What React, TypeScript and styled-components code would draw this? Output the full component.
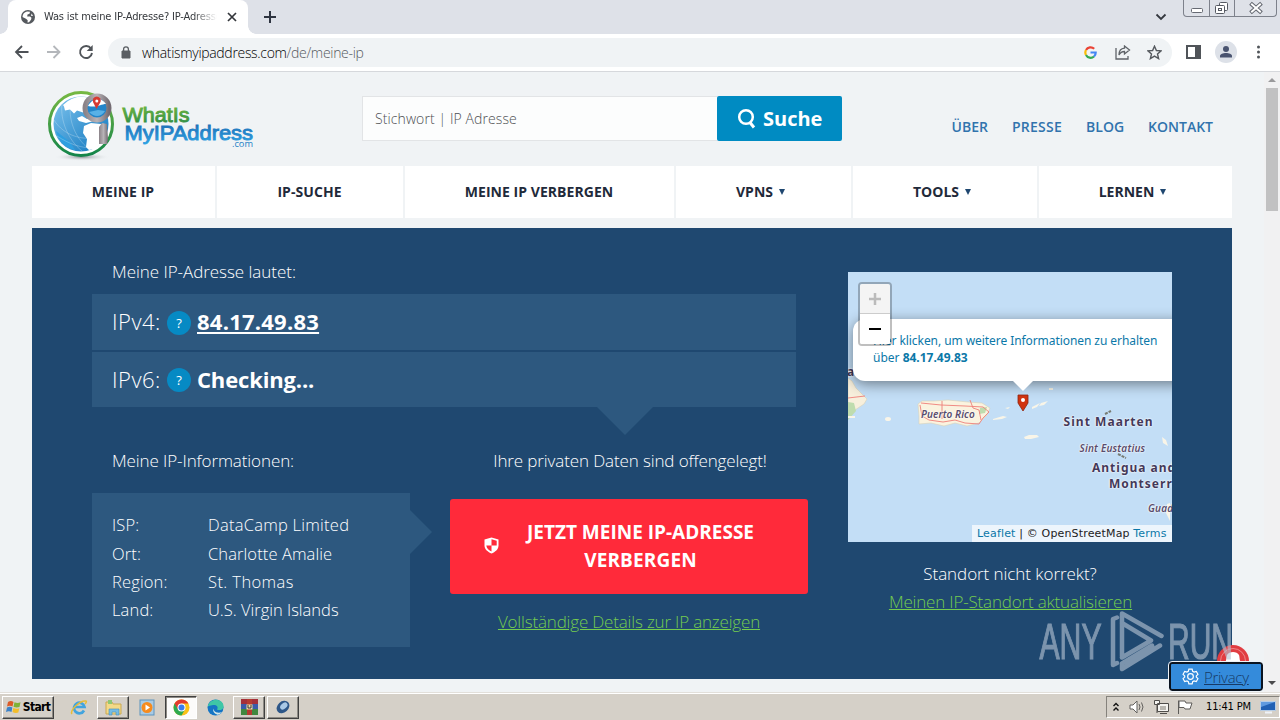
import React from 'react';
import styled, { createGlobalStyle, css } from 'styled-components';

const GlobalStyle = createGlobalStyle`
  * { box-sizing: border-box; }
  body { margin: 0; overflow: hidden; background: #f0f3f6; font-family: "Open Sans", "Noto Sans", sans-serif; }
  a { color: inherit; }
`;

const sysFont = '"DejaVu Sans Condensed", "DejaVu Sans", sans-serif';

const Screen = styled.div`
  position: relative;
  width: 1280px;
  height: 720px;
  display: flex;
  flex-direction: column;
  overflow: hidden;
`;

const Label = styled.span<{ $ls?: number }>`
  white-space: nowrap;
  letter-spacing: ${p => p.$ls ?? 0}px;
`;

/* ---------- browser chrome ---------- */

const TabStrip = styled.div`
  height: 34px;
  flex: none;
  display: flex;
  align-items: flex-start;
  background: #dee1e8;
  padding-left: 8px;
`;

const Tab = styled.div`
  position: relative;
  width: 240px;
  height: 34px;
  display: flex;
  align-items: center;
  padding: 0 9px 0 13px;
  gap: 8px;
  background: #fff;
  border-radius: 8px 8px 0 0;
  &::before, &::after {
    content: "";
    position: absolute;
    bottom: 0;
    width: 8px;
    height: 8px;
  }
  &::before { left: -8px; background: radial-gradient(circle at 0 0, #dee1e8 7.5px, #fff 8px); }
  &::after { right: -8px; background: radial-gradient(circle at 100% 0, #dee1e8 7.5px, #fff 8px); }
`;

const TabTitle = styled.div`
  flex: 1;
  overflow: hidden;
  white-space: nowrap;
  font: 11px/16px ${sysFont};
  letter-spacing: -0.15px;
  padding-left: 1px;
  color: #34373b;
  mask-image: linear-gradient(90deg, #000 86%, transparent);
`;

const StripIcon = styled.div<{ $ml: number; $mt: number }>`
  margin: ${p => p.$mt}px 0 0 ${p => p.$ml}px;
  display: flex;
`;

const WindowButtons = styled.div`
  display: flex;
  width: 94px;
  height: 17px;
  margin-left: 16px;
  border: 1px solid #7d818b;
  border-top: 0;
  border-radius: 0 0 4px 4px;
`;

const WindowButton = styled.div<{ $w: number }>`
  width: ${p => p.$w}px;
  display: flex;
  justify-content: center;
  & + & { border-left: 1px solid #7d818b; }
`;

const Toolbar = styled.div`
  height: 38px;
  flex: none;
  display: flex;
  align-items: center;
  padding: 0 19px 1px 14px;
  background: #fff;
  border-bottom: 1px solid #d6d8dc;
`;

const ToolIcon = styled.div<{ $w: number }>`
  width: ${p => p.$w}px;
  display: flex;
  align-items: center;
  flex: none;
`;

const AddressBar = styled.div`
  flex: 1;
  height: 29px;
  border-radius: 15px;
  background: #f0f3f5;
  display: flex;
  align-items: center;
  padding: 0 10px 0 13px;
  margin-right: 14px;
`;

const Url = styled.div`
  flex: 1;
  margin: 1px 0 0 11px;
  font-size: 14px;
  font-weight: 300;
  line-height: 20px;
  letter-spacing: -0.32px;
  color: #55595e;
  b { font-weight: 300; color: #000; }
`;

/* ---------- page ---------- */

const Viewport = styled.div`
  height: 620px;
  flex: none;
  display: flex;
`;

const Page = styled.main`
  width: 1264px;
  padding: 0 32px;
  background: #f0f3f5;
`;

const Scrollbar = styled.div`
  width: 16px;
  background: #f1f1f2;
  display: flex;
  flex-direction: column;
  align-items: center;
  justify-content: space-between;
  padding: 5px 0 6px;
`;

const Thumb = styled.div`
  width: 12px;
  height: 123px;
  margin: 6px 0 auto;
  background: #c1c1c2;
`;

const Header = styled.header`
  height: 94px;
  display: flex;
  align-items: flex-start;
  padding-right: 19px;
`;

const LogoBox = styled.div`
  width: 330px;
  height: 94px;
`;

const SearchInput = styled.div`
  width: 355px;
  height: 45px;
  margin-top: 24px;
  padding-left: 12px;
  border: 1px solid #e2e4e6;
  border-right: 0;
  background: #fcfdfd;
  color: #4c4f52;
  font-size: 14px;
  font-weight: 300;
  line-height: 44px;
`;

const SearchButton = styled.div`
  width: 125px;
  height: 45px;
  margin-top: 24px;
  display: flex;
  align-items: center;
  gap: 6px;
  padding-left: 20px;
  border-radius: 2px;
  background: #008bc2;
  color: #fff;
  font-size: 20px;
  font-weight: 700;
`;

const HeaderLinks = styled.div`
  margin: 45px 0 0 auto;
  display: flex;
  gap: 24px;
  font-size: 14px;
  font-weight: 600;
  line-height: 20px;
  color: #3173ad;
`;

const Nav = styled.nav`
  display: flex;
  gap: 2px;
  height: 52px;
`;

const NavItem = styled.div<{ $w: number; $menu: boolean }>`
  width: ${p => p.$w}px;
  display: flex;
  align-items: center;
  justify-content: center;
  gap: 6px;
  padding: 0 ${p => (p.$menu ? 6 : 1)}px 1px 0;
  background: #fff;
  color: #1f2a3a;
  font-size: 14px;
  font-weight: 700;
`;

const Caret = styled.i`
  border: 3px solid transparent;
  border-top: 6px solid #1f4770;
  border-bottom: 0;
`;

const Hero = styled.section`
  margin-top: 10px;
  height: 451px;
  background: #1f4870;
  display: flex;
  padding: 0 60px;
  color: #fff;
`;

const Left = styled.div`
  width: 716px;
  margin-right: 40px;
`;

const Intro = styled.div`
  height: 66px;
  padding: 32px 0 0 20px;
  font-size: 17px;
  line-height: 24px;
  font-weight: 300;
`;

const IpList = styled.div`
  position: relative;
  width: 704px;
  display: flex;
  flex-direction: column;
  gap: 2px;
  &::after {
    content: "";
    position: absolute;
    left: 505px;
    top: 113px;
    border: 28px solid transparent;
    border-top-color: #2d587f;
    border-bottom: 0;
  }
`;

const IpRow = styled.div<{ $h: number }>`
  height: ${p => p.$h}px;
  display: flex;
  align-items: center;
  padding: 0 0 2px 20px;
  background: #2d587f;
  font-size: 22px;
  line-height: 30px;
`;

const IpLabel = styled.div`
  width: 55px;
  font-weight: 300;
  letter-spacing: 0.5px;
`;

const Help = styled.div`
  width: 24px;
  height: 24px;
  margin: 3px 6px 0 0;
  border-radius: 50%;
  background: #068ac4;
  text-align: center;
  font-size: 13px;
  line-height: 24px;
`;

const IpValue = styled.div<{ $link?: boolean; $ls: number }>`
  font-weight: 700;
  letter-spacing: ${p => p.$ls}px;
  ${p => p.$link && css`text-decoration: underline; text-decoration-thickness: 2px; text-underline-offset: 2px;`}
`;

const Lower = styled.div`
  display: flex;
  gap: 40px;
`;

const InfoColumn = styled.div`
  width: 318px;
`;

const InfoTitle = styled.div<{ $center?: boolean; $h: number }>`
  height: ${p => p.$h}px;
  padding: 42px 0 0 ${p => (p.$center ? 2 : 20)}px;
  text-align: ${p => (p.$center ? 'center' : 'left')};
  font-size: 17px;
  font-weight: 300;
  line-height: 24px;
`;

const InfoBox = styled.dl`
  position: relative;
  height: 154px;
  margin: 0;
  padding: 18px 20px;
  display: grid;
  grid-template-columns: 96px 1fr;
  grid-template-rows: 29px 28px 28px 28px;
  background: #2d587f;
  font-size: 16.5px;
  font-weight: 300;
  line-height: 28px;
  dt, dd { margin: 0; }
  &::after {
    content: "";
    position: absolute;
    left: 318px;
    top: 17px;
    border: 22px solid transparent;
    border-left-color: #2d587f;
    border-right: 0;
  }
`;

const ActionColumn = styled.div`
  width: 358px;
`;

const HideButton = styled.div`
  height: 95px;
  padding: 0 54px 2px 34px;
  display: flex;
  align-items: center;
  justify-content: space-between;
  border-radius: 3px;
  background: #ff2a3a;
  font-size: 19px;
  font-weight: 700;
  line-height: 28px;
  text-align: center;
`;

const GreenLink = styled.div<{ $mt: number; $shift?: number }>`
  margin-top: ${p => p.$mt}px;
  padding-left: ${p => p.$shift ?? 0}px;
  text-align: center;
  font-size: 17px;
  font-weight: 300;
  line-height: 24px;
  color: #74cc4f;
  text-decoration: underline;
`;

const Right = styled.div`
  width: 324px;
  padding-top: 44px;
`;

const MapView = styled.div`
  position: relative;
  width: 324px;
  height: 270px;
  overflow: hidden;
  background: #c3def6;
`;

const Land = styled.svg`
  display: block;
`;

const Place = styled.div<{ $x: number; $y: number; $size: number; $italic?: boolean; $ls: number }>`
  position: absolute;
  left: ${p => p.$x}px;
  top: ${p => p.$y}px;
  white-space: nowrap;
  font-family: "Noto Sans", sans-serif;
  font-size: ${p => p.$size}px;
  line-height: 16px;
  font-weight: ${p => (p.$italic ? 600 : 700)};
  font-style: ${p => (p.$italic ? 'italic' : 'normal')};
  letter-spacing: ${p => p.$ls}px;
  color: ${p => (p.$italic ? '#594c6c' : '#43395a')};
  text-shadow: 0 0 2px #fff, 0 0 2px #fff;
`;

const Popup = styled.div`
  position: absolute;
  left: 5px;
  top: 47px;
  width: 340px;
  height: 62px;
  padding: 13px 20px;
  border-radius: 12px;
  background: #fff;
  box-shadow: 0 3px 14px rgba(0, 0, 0, 0.45);
  color: #0b78a8;
  font-family: "Noto Sans", sans-serif;
  font-size: 12px;
  line-height: 17px;
  white-space: nowrap;
`;

const PopupTip = styled.svg`
  position: absolute;
  left: 160px;
  top: 108px;
`;

const Pin = styled.svg`
  position: absolute;
  left: 169px;
  top: 122px;
`;

const ZoomControl = styled.div`
  position: absolute;
  left: 10px;
  top: 10px;
  width: 34px;
  height: 64px;
  border: 2px solid rgba(0, 0, 0, 0.25);
  border-radius: 4px;
  overflow: hidden;
`;

const ZoomButton = styled.div<{ $off?: boolean }>`
  height: 30px;
  display: flex;
  align-items: center;
  justify-content: center;
  background: ${p => (p.$off ? '#f4f4f4' : '#fff')};
  border-bottom: ${p => (p.$off ? '1px solid #ccc' : '0')};
`;

const Attribution = styled.div`
  position: absolute;
  right: 0;
  bottom: 0;
  width: 200px;
  height: 17px;
  padding-left: 5px;
  background: rgba(255, 255, 255, 0.7);
  color: #222;
  font: 11px/18px "DejaVu Sans", sans-serif;
  white-space: nowrap;
  em { font-style: normal; color: #0b78a8; }
`;

const MapNote = styled.div`
  margin-top: 20px;
  text-align: center;
  font-size: 17px;
  font-weight: 300;
  line-height: 24px;
`;

/* ---------- overlays ---------- */

const Watermark = styled.svg`
  position: absolute;
  left: 1036px;
  top: 606px;
`;

const Badge = styled.svg`
  position: absolute;
  left: 1216px;
  top: 644px;
`;

const PrivacyButton = styled.div`
  position: absolute;
  left: 1169px;
  top: 662px;
  width: 94px;
  height: 29px;
  display: flex;
  align-items: center;
  padding-left: 11px;
  gap: 5px;
  border: 2px solid #0b1420;
  border-radius: 3px;
  outline: 1px solid #eef3f8;
  background: #348bdb;
  color: #173a66;
  font-size: 15px;
  font-weight: 300;
  line-height: 22px;
  text-decoration: underline;
`;

/* ---------- taskbar ---------- */

const Taskbar = styled.footer`
  height: 28px;
  flex: none;
  display: flex;
  align-items: center;
  padding: 1px 0 0 2px;
  background: #d5d0c8;
  border-top: 1px solid #e2dfda;
  box-shadow: inset 0 1px #fff;
`;

const TaskButton = styled.div<{ $w: number; $look?: 'up' | 'down'; $ml?: number }>`
  width: ${p => p.$w}px;
  height: 23px;
  margin-left: ${p => p.$ml ?? 0}px;
  display: flex;
  align-items: center;
  justify-content: center;
  gap: 2px;
  font: bold 12px/16px ${sysFont};
  color: #000;
  ${p => p.$look === 'up' && css`
    border: 1px solid;
    border-color: #fff #404040 #404040 #fff;
    box-shadow: inset -1px -1px #8d8a84;
  `}
  ${p => p.$look === 'down' && css`
    border: 1px solid;
    border-color: #404040 #fff #fff #404040;
    background: #fcfbfa;
    box-shadow: inset 1px 1px #8d8a84;
  `}
`;

const Tray = styled.div`
  margin-left: auto;
  width: 174px;
  height: 22px;
  display: flex;
  align-items: center;
  padding-left: 5px;
  border: 1px solid;
  border-color: #85827c #fff #fff #85827c;
  font: 11px/16px ${sysFont};
  color: #000;
`;

const TraySlot = styled.div<{ $w: number }>`
  width: ${p => p.$w}px;
  display: flex;
`;

const Logo = () => (
  <svg width="230" height="94" viewBox="32 72 230 94">
    <defs>
      <linearGradient id="ring" x1="0" y1="0" x2="0" y2="1">
        <stop offset="0" stopColor="#76b843" /><stop offset="1" stopColor="#14854a" />
      </linearGradient>
      <linearGradient id="sea" x1="0" y1="0" x2="1" y2="1">
        <stop offset="0" stopColor="#7fc4ee" /><stop offset="1" stopColor="#0d75bd" />
      </linearGradient>
      <linearGradient id="metal" x1="0" y1="0" x2="1" y2="0">
        <stop offset="0" stopColor="#8b8388" /><stop offset=".5" stopColor="#b8b3b7" /><stop offset="1" stopColor="#736b72" />
      </linearGradient>
      <linearGradient id="wordGreen" x1="0" y1="0" x2="0" y2="1">
        <stop offset="0" stopColor="#78ba3e" /><stop offset="1" stopColor="#2b8b45" />
      </linearGradient>
      <linearGradient id="wordBlue" x1="0" y1="0" x2="0" y2="1">
        <stop offset="0" stopColor="#1c66ae" /><stop offset="1" stopColor="#2da0e2" />
      </linearGradient>
      <radialGradient id="shade"><stop offset="0" stopColor="#8f9397" /><stop offset="1" stopColor="#f0f3f6" stopOpacity="0" /></radialGradient>
    </defs>
    <ellipse cx="82" cy="157" rx="28" ry="4" fill="url(#shade)" />
    <circle cx="81" cy="124" r="31.500" fill="#fff" stroke="url(#ring)" strokeWidth="3" />
    <circle cx="81" cy="124" r="27.500" fill="url(#sea)" />
    <path d="M63 105q8-8 18-8.500l7 1-1 9-4 6-6-2-3 3-4-4-5 1-1-4z" fill="#fff" />
    <path d="M84 126l7-3 10 1 5 8-3 10-8 7-6 1-3-3 1-8-4-6z" fill="#fff" />
    <path d="M77 118l5-2 5 3 6-2 1 4-8 2-7-2z" fill="#fff" />
    <path d="M56 131q4 16 19 19l-5-8z" fill="#2f9fe0" />
    <g fill="none" stroke="#fff" strokeOpacity=".4" strokeWidth=".6">
      <path d="M54 120c10 16 30 22 48 16M57 136c12 8 24 12 36 12M62 104c-2 16 6 36 20 47M72 98c-5 16 0 38 18 52" />
    </g>
    <circle cx="97" cy="108" r="12" fill="#2385c9" stroke="url(#metal)" strokeWidth="5" />
    <path d="M88 106c5-9 13-9 18-2-5 0-9 4-18 2z" fill="#fff" />
    <path d="M89 112c6 6 12 5 16-1l-7-1z" fill="#58b1e6" />
    <path d="M96.500 109l-3.500-7a4 4 0 1 1 7.500 0z" fill="#d63a31" />
    <circle cx="96.800" cy="101" r="1.500" fill="#fff" />
    <path d="M99 127l3-4 5 1 1 15-1 5h-8z" fill="url(#metal)" />
    <g fontFamily="Liberation Sans" strokeWidth=".9">
      <text x="122.500" y="121.500" fontSize="20.500" textLength="67" lengthAdjust="spacingAndGlyphs" fill="url(#wordGreen)" stroke="url(#wordGreen)">WhatIs</text>
      <text x="124.500" y="139.500" fontSize="20.500" textLength="128.500" lengthAdjust="spacingAndGlyphs" fill="url(#wordBlue)" stroke="url(#wordBlue)">MyIPAddress</text>
    </g>
    <text x="232" y="147" fontFamily="Open Sans" fontSize="9.500" textLength="21" lengthAdjust="spacingAndGlyphs" fill="#2280c5">.com</text>
  </svg>
);

const GlobeIcon = () => (
  <svg width="14" height="14" viewBox="0 0 14 14">
    <circle cx="7" cy="7" r="7" fill="#55595e" />
    <path d="M6 1.500l3 .3-.5 2-2 .8-.3 1.800 2.800.2 1.500 1.200-.5 2-2 2.500-1.500.3.2-2.300-1.700-1.600L1.500 7C1.500 4 3.500 2 6 1.500z" fill="#fff" />
    <path d="M10.500 3.500l1.600 2.200-2 .3z" fill="#fff" />
  </svg>
);

const ChromeIcon = () => (
  <svg width="17" height="17" viewBox="0 0 17 17">
    <circle cx="8.500" cy="8.500" r="8" fill="#fbc116" />
    <path d="M8.500 8.500L1.600 4.500A8 8 0 0 0 8.500 16.500l3.500-6z" fill="#2da94f" />
    <path d="M1.600 4.500A8 8 0 0 1 15.400 4.500H8.500L5 10.500z" fill="#e33b2e" />
    <circle cx="8.500" cy="8.500" r="4" fill="#fff" /><circle cx="8.500" cy="8.500" r="3" fill="#3b7ded" />
  </svg>
);

const navItems: [string, number, boolean][] = [
  ['MEINE IP', 183, false], ['IP-SUCHE', 186, false], ['MEINE IP VERBERGEN', 269, false],
  ['VPNS', 175, true], ['TOOLS', 184, true], ['LERNEN', 193, true],
];

const info: [string, string, number][] = [
  ['ISP:', 'DataCamp Limited', 0.25], ['Ort:', 'Charlotte Amalie', 0.1],
  ['Region:', 'St. Thomas', 0.4], ['Land:', 'U.S. Virgin Islands', 0],
];

export default function App() {
  return (
    <Screen>
      <GlobalStyle />
      <TabStrip>
        <Tab>
          <GlobeIcon />
          <TabTitle>Was ist meine IP-Adresse? IP-Adresse</TabTitle>
          <svg width="14" height="14" viewBox="0 0 14 14"><path d="M3 3l8 8M11 3l-8 8" stroke="#33363b" strokeWidth="1.700" /></svg>
        </Tab>
        <StripIcon $ml={16} $mt={11}>
          <svg width="12" height="12"><path d="M6 0v12M0 6h12" stroke="#2e3440" strokeWidth="2" /></svg>
        </StripIcon>
        <StripIcon $ml={879} $mt={13}>
          <svg width="12" height="9"><path d="M1.500 1.500L6 6l4.500-4.500" fill="none" stroke="#34383f" strokeWidth="1.800" /></svg>
        </StripIcon>
        <WindowButtons>
          <WindowButton $w={25}><svg width="24" height="16"><rect x="6.500" y="8.500" width="11" height="4" rx="1" fill="#fff" stroke="#666a73" /></svg></WindowButton>
          <WindowButton $w={25}><svg width="24" height="16" fill="#fff" stroke="#555962"><rect x="9.500" y="2.500" width="8" height="8" rx="1" /><rect x="5.500" y="5.500" width="9" height="8" rx="1" /><rect x="8.500" y="8.500" width="3" height="2" /></svg></WindowButton>
          <WindowButton $w={42}><svg width="24" height="16"><path d="M8 4.500l8 7M16 4.500l-8 7" stroke="#62666f" strokeWidth="4" strokeLinecap="square" /><path d="M8 4.500l8 7M16 4.500l-8 7" stroke="#fff" strokeWidth="2" strokeLinecap="square" /></svg></WindowButton>
        </WindowButtons>
      </TabStrip>

      <Toolbar>
        <ToolIcon $w={32}><svg width="16" height="14"><path d="M14.500 7H2M8 1L2 7l6 6" fill="none" stroke="#4d5156" strokeWidth="1.800" /></svg></ToolIcon>
        <ToolIcon $w={32}><svg width="16" height="14"><path d="M1 7h12.500M7.500 1l6 6-6 6" fill="none" stroke="#b4b7bb" strokeWidth="1.800" /></svg></ToolIcon>
        <ToolIcon $w={30}><svg width="16" height="16"><path d="M13 4.600A6 6 0 1 0 14 9" fill="none" stroke="#505459" strokeWidth="1.900" /><path d="M14.700 1v6h-6z" fill="#505459" /></svg></ToolIcon>
        <AddressBar>
          <svg width="10" height="13"><path d="M1 5h8v7H1z" fill="#5a5e63" stroke="#5a5e63" strokeLinejoin="round" /><path d="M2.600 5V3.200a2.400 2.400 0 0 1 4.800 0V5" fill="none" stroke="#5a5e63" strokeWidth="1.300" /></svg>
          <Url><b>whatismyipaddress.com</b>/de/meine-ip</Url>
          <ToolIcon $w={31}>
            <svg width="13" height="13" viewBox="0 0 13 13" fill="none" strokeWidth="2.200"><path d="M10.200 2.800A5.200 5.200 0 0 0 2 4" stroke="#ea4335" /><path d="M2 4a5.300 5.300 0 0 0 0 5" stroke="#fbbc05" /><path d="M2 9a5.200 5.200 0 0 0 8 1.500" stroke="#34a853" /><path d="M10 10.500A5.300 5.300 0 0 0 11.700 6.500H6.500" stroke="#4285f4" /></svg>
          </ToolIcon>
          <ToolIcon $w={32}>
            <svg width="16" height="15" fill="none" stroke="#5f6368" strokeWidth="1.300"><path d="M1 3v11h12v-3" /><path d="M9.500 1l5 4-5 4V6.500C6.500 6.500 5 8 4 10c0-4 2-6.500 5.500-6.800z" /></svg>
          </ToolIcon>
          <svg width="15" height="15" viewBox="0 0 15 15"><path d="M7.500 1.200l1.900 4.300 4.700.4-3.600 3.100 1.100 4.600-4.100-2.500-4.100 2.500 1.100-4.600L.9 5.900l4.700-.4z" fill="none" stroke="#55595e" strokeWidth="1.400" /></svg>
        </AddressBar>
        <ToolIcon $w={29}><svg width="15" height="14"><path d="M1 1h13v12H1z" fill="#fff" stroke="#505459" strokeWidth="2" /><path d="M9 0h6v14H9z" fill="#505459" /></svg></ToolIcon>
        <ToolIcon $w={41}><svg width="22" height="22"><circle cx="11" cy="11" r="11" fill="#dde1e8" /><circle cx="11" cy="8" r="3" fill="#4a5470" /><path d="M5 16.500v-1.500c0-4 12-4 12 0v1.500z" fill="#4a5470" /></svg></ToolIcon>
        <svg width="5" height="14" fill="#505459"><circle cx="2.500" cy="2" r="1.500" /><circle cx="2.500" cy="7" r="1.500" /><circle cx="2.500" cy="12" r="1.500" /></svg>
      </Toolbar>

      <Viewport>
        <Page>
          <Header>
            <LogoBox><Logo /></LogoBox>
            <SearchInput><Label $ls={0.1}>Stichwort | IP Adresse</Label></SearchInput>
            <SearchButton>
              <svg width="20" height="22"><circle cx="9" cy="9" r="6.800" fill="none" stroke="#fff" strokeWidth="2.500" /><path d="M13 14.500l4 5" stroke="#fff" strokeWidth="3" /></svg>
              <Label>Suche</Label>
            </SearchButton>
            <HeaderLinks><Label>ÜBER</Label><Label $ls={0.25}>PRESSE</Label><Label>BLOG</Label><Label>KONTAKT</Label></HeaderLinks>
          </Header>
          <Nav>
            {navItems.map(([name, w, menu]) => (
              <NavItem key={name} $w={w} $menu={menu}><Label $ls={menu ? 0 : 0.05}>{name}</Label>{menu && <Caret />}</NavItem>
            ))}
          </Nav>
          <Hero>
            <Left>
              <Intro><Label $ls={-0.04}>Meine IP-Adresse lautet:</Label></Intro>
              <IpList>
                <IpRow $h={56}><IpLabel>IPv4:</IpLabel><Help>?</Help><IpValue $link $ls={0.24}>84.17.49.83</IpValue></IpRow>
                <IpRow $h={55}><IpLabel>IPv6:</IpLabel><Help>?</Help><IpValue $ls={-0.15}>Checking...</IpValue></IpRow>
              </IpList>
              <Lower>
                <InfoColumn>
                  <InfoTitle $h={86}><Label $ls={-0.1}>Meine IP-Informationen:</Label></InfoTitle>
                  <InfoBox>
                    {info.map(([k, v, ls]) => <React.Fragment key={k}><dt><Label $ls={0.15}>{k}</Label></dt><dd><Label $ls={ls}>{v}</Label></dd></React.Fragment>)}
                  </InfoBox>
                </InfoColumn>
                <ActionColumn>
                  <InfoTitle $center $h={92}><Label $ls={-0.12}>Ihre privaten Daten sind offengelegt!</Label></InfoTitle>
                  <HideButton>
                    <svg width="15" height="17" viewBox="0 0 15 17"><path d="M7.500.5L14.500 2.500v6c0 4-3.500 6.500-7 8C4 15 .5 12.500.5 8.500v-6z" fill="#fff" /><path d="M7.500 2.300V8.500H12.700V3.800zM7.500 8.500V14.500C5 13.300 2.600 11.500 2.300 8.500z" fill="#ff2a3a" /></svg>
                    <div><Label>JETZT MEINE IP-ADRESSE</Label><br /><Label $ls={0.15}>VERBERGEN</Label></div>
                  </HideButton>
                  <GreenLink $mt={16}><Label $ls={-0.18}>Vollständige Details zur IP anzeigen</Label></GreenLink>
                </ActionColumn>
              </Lower>
            </Left>
            <Right>
              <MapView>
                <Land width="324" height="270">
                  <g stroke="#d9d2b8" strokeWidth=".6">
                    <path d="M0 106l4 3 4 7 7 7 4 4-3 5-9 6-7 2z" fill="#f7efdc" />
                    <path d="M70 132l4-3 12 0 14-1 20 2 14 1 8 5-3 7-8 8-12 3-12-3-11 3-13-3-12 1 0-8z" fill="#faf3df" />
                  </g>
                  <path d="M0 130l6 1 2 8-8 9zM132 136l7-1-2 6-6 1z" fill="#bfdcae" />
                  <path d="M0 126l17-2M73 131l20 2 24 1 18 1 6 5-6 6-4 6-14-1-10-3-12 2-14-2-7-4-2-11M94 129v18M122 128l3 8 6 2 2 10" fill="none" stroke="#ee7f79" strokeWidth=".9" />
                  <g fill="#f9f5e8">
                    <ellipse cx="40" cy="147" rx="3" ry="2" /><path d="M145 147l10-3 4 1-5 2-9 1zM157 136l5-1-2 2zM176 165l5-2h8l2 2-8 2-6 0zM184 135l8-4-3 4-5 2zM193 131l7-2-4 4-5 1zM201 116h4v2h-4z" />
                    <path d="M314 165l4 3 2 6-5-3zM322 231v18l-4-8 1-9zM0 144h7l0 2H0z" />
                  </g>
                  <path d="M257 142l6-3M270 182l8 4" stroke="#777b72" strokeWidth="2" strokeDasharray="3 1" />
                </Land>
                <Place $x={-1} $y={92} $size={12} $ls={0}>a</Place>
                <Place $x={73} $y={134} $size={10} $italic $ls={0.08}>Puerto Rico</Place>
                <Place $x={215.5} $y={142} $size={12} $ls={1.05}>Sint Maarten</Place>
                <Place $x={231.5} $y={168} $size={10} $italic $ls={0.2}>Sint Eustatius</Place>
                <Place $x={244} $y={188} $size={12} $ls={1}>Antigua and</Place>
                <Place $x={261} $y={204} $size={12} $ls={1}>Montserrat</Place>
                <Place $x={300} $y={227.500} $size={10} $italic $ls={0.2}>Guadeloupe</Place>
                <Popup><Label $ls={-0.07}>Hier klicken, um weitere Informationen zu erhalten</Label><br /><Label>über <b>84.17.49.83</b></Label></Popup>
                <PopupTip width="30" height="14"><path d="M4 0h22L15 11z" fill="#fff" /></PopupTip>
                <Pin width="12" height="18"><path d="M1 1h10v8L6 17 1 9z" fill="#d0330f" stroke="#8e2410" strokeWidth=".8" /><circle cx="6" cy="6" r="2" fill="#fff" /></Pin>
                <ZoomControl>
                  <ZoomButton $off><svg width="14" height="14"><path d="M7 1v12M1 7h12" stroke="#bbb" strokeWidth="2.500" /></svg></ZoomButton>
                  <ZoomButton><svg width="12" height="4"><path d="M0 2h12" stroke="#000" strokeWidth="2" /></svg></ZoomButton>
                </ZoomControl>
                <Attribution><Label $ls={0.16}><em>Leaflet</em> | © OpenStreetMap <em>Terms</em></Label></Attribution>
              </MapView>
              <MapNote><Label $ls={-0.06}>Standort nicht korrekt?</Label></MapNote>
              <GreenLink $mt={4} $shift={1}><Label $ls={-0.18}>Meinen IP-Standort aktualisieren</Label></GreenLink>
            </Right>
          </Hero>
        </Page>
        <Scrollbar>
          <svg width="8" height="5"><path d="M0 5l4-4 4 4z" fill="#9a9a9c" /></svg>
          <Thumb />
          <svg width="8" height="5"><path d="M0 0l4 4 4-4z" fill="#4b4b4d" /></svg>
        </Scrollbar>
      </Viewport>

      <Taskbar>
        <TaskButton $w={52} $look="up">
          <svg width="15" height="14" viewBox="0 0 15 14"><path d="M2 2q3-2 5.500 0L6.500 6.500Q4 5 1 6.500z" fill="#dc5b28" /><path d="M8.500 2.300q3 1.500 6 0L13.500 7Q10.500 8 7.500 6.800z" fill="#7fb238" /><path d="M1 7.500q3-1.500 5.300 0L5.500 12Q3 10.500 0 12z" fill="#3b82c9" /><path d="M7.300 8q3 1.500 6 .3l-1 4.300q-3 1-5.800-.6z" fill="#f3bd2a" /></svg>
          <Label $ls={-0.65}>Start</Label>
        </TaskButton>
        <TaskButton $w={32} $ml={9}>
          <svg width="18" height="17" viewBox="0 0 18 17" fill="none"><path d="M14 11.500a5.300 5.300 0 1 1 .5-3.500H5" stroke="#42a4de" strokeWidth="2.700" /><path d="M2 15c-3-3 8-14 14-13 1 .5 0 2-1 3" stroke="#e8bd38" strokeWidth="1.500" /></svg>
        </TaskButton>
        <TaskButton $w={32} $look="up" $ml={2}>
          <svg width="17" height="17"><path d="M1 3h6l1 2h8v10H1z" fill="#f3d987" stroke="#cba951" /><path d="M3 1h4v4H3z" fill="#8fc772" /><path d="M4 16v-6h10v6h-3v-3H7v3z" fill="#75bce4" stroke="#438fbd" strokeWidth=".6" /></svg>
        </TaskButton>
        <TaskButton $w={32} $ml={2}>
          <svg width="17" height="17"><rect x="1" y="1" width="14" height="15" fill="#a9cbe4" stroke="#5d93be" /><circle cx="8" cy="8.500" r="5.500" fill="#f68b1e" /><path d="M6.500 5.500v6l4.500-3z" fill="#fff" /></svg>
        </TaskButton>
        <TaskButton $w={32} $look="down" $ml={2}><ChromeIcon /></TaskButton>
        <TaskButton $w={32} $ml={2}>
          <svg width="17" height="17"><circle cx="8.500" cy="8.500" r="8" fill="#1675c4" /><path d="M.5 8C2 2 7 0 11 1c4 1 6 4 5.500 7.500-1 3-5 3-6.500 2 2-3-1-5-4-4.500S1 7 .5 8z" fill="#3fc7a6" /><path d="M6.500 9.500c0 4 5 5 8.500 3.500-2 2.500-4 3-5 2.500-3-1-4.500-3.500-3.500-6z" fill="#d5e6e6" /></svg>
        </TaskButton>
        <TaskButton $w={32} $look="up" $ml={2}>
          <svg width="17" height="16"><path d="M0 0h17v5H0z" fill="#a4303a" /><path d="M0 5h17v5H0z" fill="#3b5ba9" /><path d="M0 10h17v6H0z" fill="#41883f" /><path d="M6 0h5v16H6z" fill="#b53b32" /><path d="M5.500 5.500h6v5h-6z" fill="#f0dfa6" /><path d="M7 6v3h3V6" fill="none" stroke="#333" /></svg>
        </TaskButton>
        <TaskButton $w={32} $look="up" $ml={2}>
          <svg width="16" height="16"><ellipse cx="8" cy="8" rx="7" ry="5.500" transform="rotate(-42 8 8)" fill="#2d5688" /><ellipse cx="8.800" cy="7" rx="4.200" ry="2.800" transform="rotate(-42 8.800 7)" fill="#a9c8e6" /></svg>
        </TaskButton>
        <Tray>
          <TraySlot $w={17}><svg width="8" height="12" fill="none" stroke="#111" strokeWidth="1.400"><path d="M1.500 5L4 2.500 6.500 5M1.500 9.500L4 7l2.500 2.500" /></svg></TraySlot>
          <TraySlot $w={24}><svg width="18" height="16" fill="#fff" stroke="#63615e"><path d="M1 6h3l4-4v12l-4-4H1z" /><path d="M10 5q2 3 0 6M12.500 3.500q3 4.500 0 9" fill="none" /></svg></TraySlot>
          <TraySlot $w={24}><svg width="17" height="16" fill="#f4f3f0" stroke="#4f4d4a"><path d="M4.500 4.500h11v8h-11zM7 14.500h7M1.500 1.500h5v4h-5zM4 6v8" /><path d="M7 7h6v4H7z" fill="#b9b6b0" stroke="none" /></svg></TraySlot>
          <TraySlot $w={29}><svg width="17" height="16" fill="#fff" stroke="#5d5b58"><path d="M1.500 15V1.500M2 2h6l1 2h6l-2 6H8L7 8.500H2z" /></svg></TraySlot>
          <TraySlot $w={54}><Label $ls={-0.15}>11:41 PM</Label></TraySlot>
          <TraySlot $w={17}><svg width="16" height="14"><path d="M.5 1.500h15v9H.5z" fill="#2160b4" stroke="#b7cde6" /><path d="M1 2h14L1 7z" fill="#5f9ae0" /><path d="M5 12.500h7" stroke="#eef2f8" strokeWidth="2" /></svg></TraySlot>
        </Tray>
      </Taskbar>

      <Badge width="34" height="34"><circle cx="17" cy="17" r="16" fill="#e13c41" /><circle cx="17" cy="17" r="12.500" fill="none" stroke="#f0999c" strokeWidth=".8" /><path d="M8 19c3-2 2-5 3-8 2-4 10-4 12 0 1 3 0 6 3 8z" fill="#fff" /></Badge>
      <Watermark width="200" height="70" viewBox="1036 606 200 70" opacity=".62">
        <g fill="#b5c3d3" stroke="#b5c3d3" strokeWidth="1.200" fontFamily="Liberation Sans" fontSize="50">
          <text x="1039.500" y="659" textLength="62" lengthAdjust="spacingAndGlyphs">ANY</text>
          <text x="1168" y="659" textLength="65" lengthAdjust="spacingAndGlyphs">RUN</text>
        </g>
        <g fill="none" stroke="#b5c3d3" strokeWidth="4.500" strokeLinejoin="round" strokeLinecap="round">
          <path d="M1117 617.500l-4 1.500v46l4-2M1122 656V613.500L1161.500 636M1160 645.500L1122 669V663.500L1152 645.500M1122 623l29 17.500-29 17" />
        </g>
      </Watermark>
      <PrivacyButton>
        <svg width="17" height="17" viewBox="0 0 24 24" fill="none" stroke="#fff" strokeWidth="1.700"><circle cx="12" cy="12" r="4" /><path d="M9.700 1.500h4.600l.8 3.200 1.900 1.100 3.200-.9 2.300 4-2.300 2.300v1.600l2.300 2.300-2.300 4-3.200-.9-1.900 1.100-.8 3.200H9.700l-.8-3.200L7 18.200l-3.200.9-2.300-4 2.300-2.300v-1.600L1.500 8.900l2.300-4L7 5.800l1.900-1.100z" /></svg>
        <Label $ls={-0.3}>Privacy</Label>
      </PrivacyButton>
    </Screen>
  );
}
